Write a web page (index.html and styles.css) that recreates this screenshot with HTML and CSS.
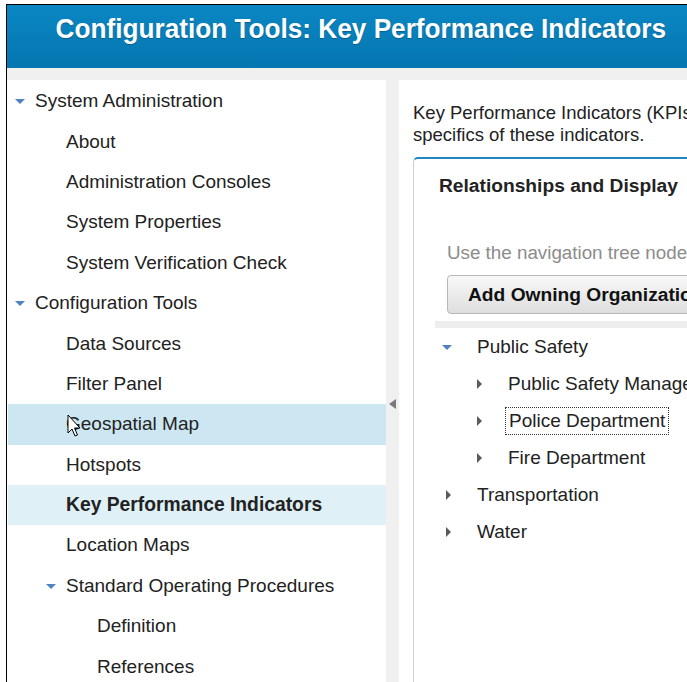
FILE: index.html
```html
<!DOCTYPE html>
<html lang="en">
<head>
  <meta charset="UTF-8" />
  <title>Configuration Tools: Key Performance Indicators</title>
  <link rel="stylesheet" href="styles.css">
</head>
<body>
  <div class="frame">
    <div class="header">
      <h1>Configuration Tools: Key Performance Indicators</h1>
    </div>
    <div class="main">
      <div class="nav">
        <div class="row l1"><span class="twisty open"></span>System Administration</div>
        <div class="row l2"><span class="twisty"></span>About</div>
        <div class="row l2"><span class="twisty"></span>Administration Consoles</div>
        <div class="row l2"><span class="twisty"></span>System Properties</div>
        <div class="row l2"><span class="twisty"></span>System Verification Check</div>
        <div class="row l1"><span class="twisty open"></span>Configuration Tools</div>
        <div class="row l2"><span class="twisty"></span>Data Sources</div>
        <div class="row l2"><span class="twisty"></span>Filter Panel</div>
        <div class="row l2 hover"><span class="twisty"></span>Geospatial Map
          <svg class="cursor" width="14" height="24" viewBox="0 0 14 24">
            <path d="M1 1 L1 19 L5 15 L8 22 L10.5 21 L7.5 14 L13 14 Z" fill="#fff" stroke="#000" stroke-width="1" stroke-linejoin="round"/>
          </svg>
        </div>
        <div class="row l2"><span class="twisty"></span>Hotspots</div>
        <div class="row l2 selected"><span class="twisty"></span>Key Performance Indicators</div>
        <div class="row l2"><span class="twisty"></span>Location Maps</div>
        <div class="row l2"><span class="twisty open"></span>Standard Operating Procedures</div>
        <div class="row l3"><span class="twisty"></span>Definition</div>
        <div class="row l3"><span class="twisty"></span>References</div>
      </div>
      <div class="splitter"><span class="collapse"></span></div>
      <div class="content">
        <p class="intro">Key Performance Indicators (KPIs) define the measurements that you want to track. Use this page to configure the<br>specifics of these indicators.</p>
        <div class="card">
          <div class="card-title">Relationships and Display</div>
          <div class="hint">Use the navigation tree nodes to add, edit, or remove organizations and indicators.</div>
          <button class="btn">Add Owning Organization</button>
          <div class="sep"></div>
          <div class="tree">
            <div class="trow t1"><span class="twisty open"></span>Public Safety</div>
            <div class="trow t2"><span class="twisty closed"></span>Public Safety Management</div>
            <div class="trow t2"><span class="twisty closed"></span><span class="focus">Police Department</span></div>
            <div class="trow t2"><span class="twisty closed"></span>Fire Department</div>
            <div class="trow t1"><span class="twisty closed"></span>Transportation</div>
            <div class="trow t1"><span class="twisty closed"></span>Water</div>
          </div>
        </div>
      </div>
    </div>
  </div>
</body>
</html>
```

FILE: styles.css
```css
html, body { margin: 0; height: 100%; overflow: hidden; background: #fff; }
body { font-family: "Liberation Sans", Arial, sans-serif; color: #222; }

.frame { margin: 4px 0 0 6px; border-top: 1px solid #000; border-left: 1px solid #000; height: 700px; display: flex; flex-direction: column; overflow: hidden; }

.header { flex: none; height: 63px; background: linear-gradient(#0a87c3, #0576b0); }
.header h1 { margin: 0; padding: 8px 0 0 52px; font-size: 28px; font-weight: bold; color: #fff; line-height: 32px; white-space: nowrap; text-shadow: 0 1px 1px rgba(0,0,0,0.25); transform: scaleX(0.935); transform-origin: 0 0; }

.main { flex: 1; display: flex; background: #f0f0f0; padding-top: 12px; min-height: 0; }

.nav { width: 378px; background: #fff; padding: 1px 0 0 1px; }
.row { height: 40.4px; display: flex; align-items: center; font-size: 19px; white-space: nowrap; position: relative; }
.row.l1 { padding-left: 7px; }
.row.l2 { padding-left: 38px; }
.row.l3 { padding-left: 69px; }
.row.hover { background: #cde7f2; }
.row.selected { background: #dff0f7; font-weight: bold; font-size: 19.3px; }

.twisty { display: inline-block; width: 10px; height: 10px; margin-right: 10px; position: relative; flex: none; }
.twisty.open::before { content: ""; position: absolute; left: 0; top: 3px; border-left: 5px solid transparent; border-right: 5px solid transparent; border-top: 5px solid #4f82c2; }
.twisty.closed::before { content: ""; position: absolute; left: 4px; top: 0; border-top: 5px solid transparent; border-bottom: 5px solid transparent; border-left: 5px solid #5a5a5a; }

.cursor { position: absolute; left: 59px; top: 10px; }

.splitter { width: 13px; position: relative; }
.collapse { position: absolute; left: 3px; top: 319px; border-top: 5px solid transparent; border-bottom: 5px solid transparent; border-right: 7px solid #7a7a7a; }

.content { flex: 1; background: #fff; padding: 22px 0 0 14px; overflow: hidden; }
.intro { margin: 0; font-size: 18.5px; line-height: 22px; white-space: nowrap; }

.card { margin-top: 11px; width: 600px; height: 600px; border: 1px solid #d0d0d0; border-top: 2px solid #2186c4; border-radius: 5px 0 0 0; }
.card-title { margin: 16px 0 0 25px; font-size: 19.2px; font-weight: bold; line-height: 22px; }
.hint { margin: 45px 0 0 33px; font-size: 18.8px; line-height: 22px; color: #8c8c8c; white-space: nowrap; }
.btn { display: block; margin: 11px 0 0 33px; height: 39px; padding: 0 20px; font-family: inherit; font-size: 19.2px; font-weight: bold; color: #111; background: linear-gradient(#f8f8f8, #dedede); border: 1px solid #b8b8b8; border-radius: 4px; white-space: nowrap; }
.sep { margin: 7px 0 0 21px; height: 7px; background: #eeeeee; }

.trow { height: 37px; display: flex; align-items: center; font-size: 19px; white-space: nowrap; }
.trow .twisty { margin-right: 25px; }
.trow.t1 { padding-left: 28px; }
.trow.t2 { padding-left: 59px; }
.focus { outline: 1px dotted #333; outline-offset: 2px; padding: 0 1px; }
```
